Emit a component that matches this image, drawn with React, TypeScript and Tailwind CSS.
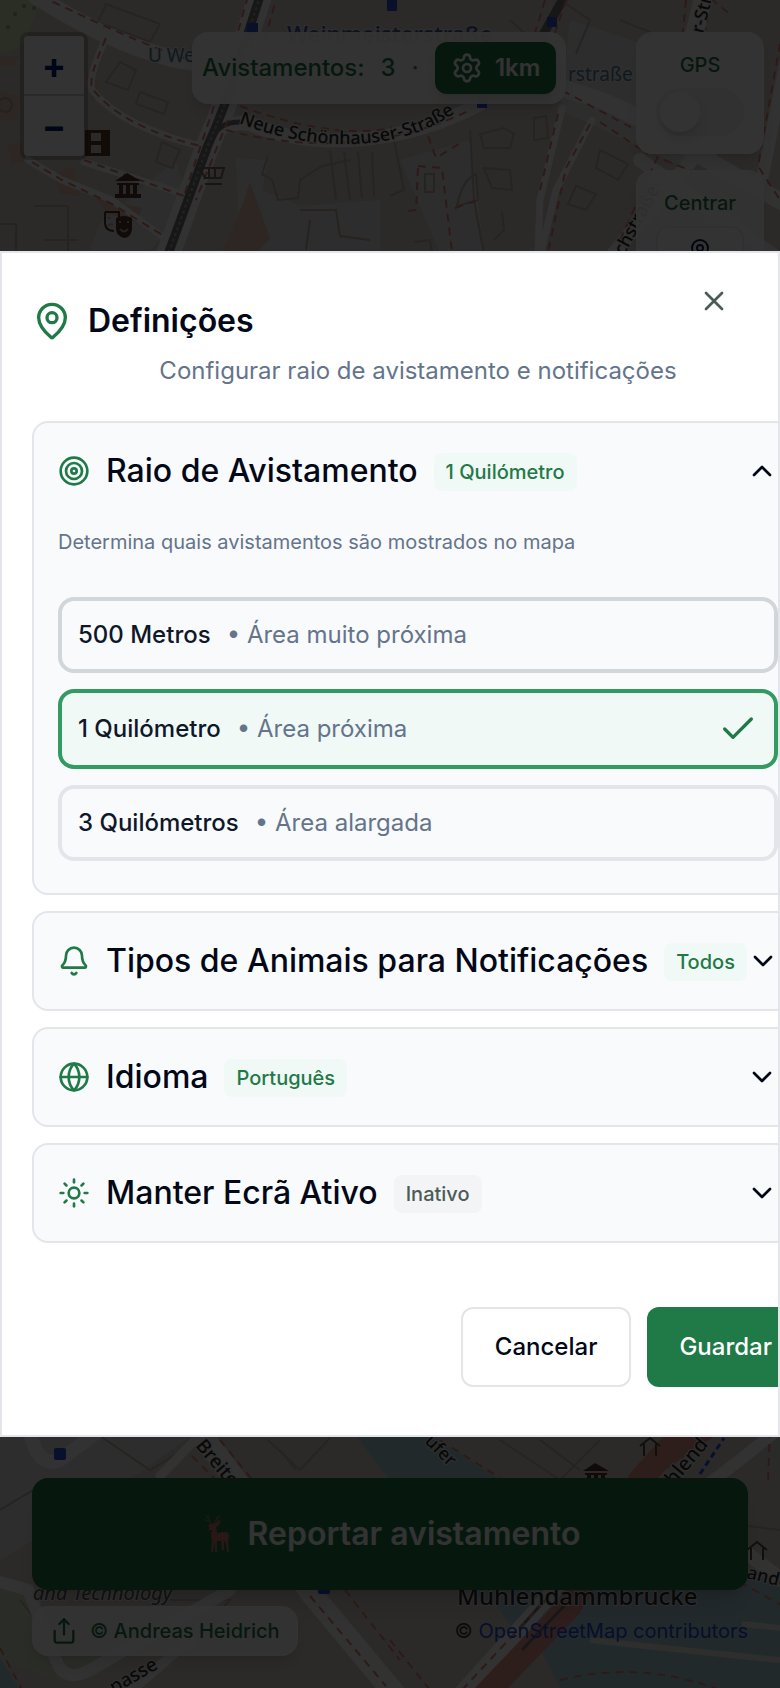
import React, { useState } from 'react';
import {
    Bell, Check, ChevronDown, ChevronUp, Globe, MapPin, Settings, Share, Sun, Target, X
} from 'lucide-react';

const streets: { d: string, w: number }[] = [
    { d: "M36 -4 C80 24 120 44 170 58 S400 60 520 80 S640 128 790 206", w: 17 },
    { d: "M262 -10 L236 70 Q226 105 208 145 L166 260", w: 24 },
    { d: "M212 136 Q226 120 250 124 C310 150 400 146 480 104", w: 14 },
    { d: "M106 38 Q88 76 92 90 Q120 126 200 146", w: 7 },
    { d: "M28 160 L62 180 L112 200 L170 242", w: 7 },
    { d: "M84 162 L190 196", w: 7 },
    { d: "M562 108 L540 200 L538 256", w: 7 },
    { d: "M592 120 L556 190 L540 256", w: 7 },
    { d: "M704 -5 L690 50", w: 18 },
    { d: "M788 50 L762 180", w: 12 },
    { d: "M640 160 L780 260", w: 14 },
    { d: "M700 150 L600 270", w: 14 },
    { d: "M0 1582 L28 1590 L56 1660 Q64 1684 90 1670 L230 1590", w: 12 },
    { d: "M30 1430 Q36 1468 60 1460 L100 1430", w: 14 },
    { d: "M195 1425 L250 1500 L310 1592 L400 1700", w: 22 },
    { d: "M200 1435 L160 1476", w: 9 },
    { d: "M455 1700 L600 1540", w: 16 },
    { d: "M120 1700 L190 1640", w: 10 },
    { d: "M790 1420 L740 1460 L700 1490", w: 12 },
    { d: "M740 1548 L790 1586", w: 14 },
];

const footways: string[] = [
    "M40 -4 C84 16 130 40 190 60",
    "M106 38 Q88 78 92 88 Q120 126 200 146",
    "M32 162 L62 180 L112 204 L164 236",
    "M84 160 L184 196",
    "M248 -4 L230 60", "M278 -8 L262 50",
    "M214 106 L184 196", "M228 120 L196 200",
    "M226 130 C300 150 390 150 470 110",
    "M240 106 C300 128 350 136 392 128",
    "M428 136 L436 158 L462 142", "M418 166 L442 168 L452 252", "M418 168 L416 210 L402 212",
    "M455 208 L478 200",
    "M558 114 L540 190", "M590 124 L566 168 L548 252",
    "M600 122 L648 154", "M550 84 L636 130", "M658 156 L620 240",
    "M686 0 L682 40", "M710 0 L706 30", "M780 44 L758 166 L780 200",
    "M545 0 L534 36", "M566 0 L554 36",
    "M700 -10 L730 14", "M664 160 L740 190",
    "M220 1440 L254 1482", "M192 1456 L222 1486",
    "M310 1596 L386 1686", "M345 1590 L400 1660",
    "M0 1648 L22 1690", "M390 1640 L430 1690",
    "M462 1690 L540 1606", "M440 1440 L500 1478",
    "M560 1680 Q640 1660 720 1690", "M740 1582 L790 1610", "M770 1430 L768 1480",
];

const buildings: string[] = [
    "M106 4 L160 24 L150 42 L98 22 Z", "M120 62 L136 70 L128 90 L106 82 Z",
    "M140 92 L168 102 L164 114 L136 104 Z", "M162 142 L180 150 L172 168 L156 162 Z",
    "M268 156 L262 174 L272 180 L278 200 L298 198 L300 180 L322 166 L350 160",
    "M0 224 L16 224 L16 252", "M34 206 L68 206 L68 252", "M44 240 H78",
    "M392 130 L404 190 L390 196", "M470 130 L474 200 L484 254",
    "M480 134 L504 128 L514 134 L510 148 L484 148 Z", "M484 168 L510 170 L512 190 L492 188 Z",
    "M414 242 L430 240 L432 252", "M534 118 L546 116 L548 138 L534 140 Z",
    "M576 186 L596 194 L586 210 L568 204 Z", "M600 150 L628 164 L618 180 L596 168 Z",
    "M560 0 L590 20 L576 54", "M620 20 L650 32 L640 50", "M510 20 L532 40",
    "M425 174 L434 174 L434 192 L425 192 Z", "M330 150 L336 200 M344 152 L350 200 M358 152 L362 198 M372 152 L374 196",
    "M300 210 H336 L340 236 L370 240 M310 220 L306 250",
    "M457 206 Q462 180 476 174 L478 200 Z", "M494 240 L504 230 L502 212",
    "M100 1436 L150 1470 L190 1446", "M268 1440 L300 1470 L330 1438 M280 1450 L296 1470",
    "M0 1510 L50 1480", "M500 1440 L560 1480 L600 1440", "M540 1440 L580 1470",
    "M20 1600 L60 1650", "M170 1600 L230 1600 L200 1630",
    "M700 1520 L780 1530",
];

const Museum = ({ x, y }: { x: number, y: number }) => (
    <g transform={`translate(${x} ${y})`} fill="#4f3a2c">
        <path d="M0 8 L12 0 L26 8 Z M2 10 H24 V12 H2 Z M4 12 H8 V21 H4 Z M11 12 H15 V21 H11 Z M18 12 H22 V21 H18 Z M0 21 H26 V25 H0 Z" />
    </g>
);

const Shelter = ({ x, y }: { x: number, y: number }) => (
    <path d={`M${x} ${y + 8} L${x + 10} ${y} L${x + 20} ${y + 8} M${x + 4} ${y + 6} V${y + 18} M${x + 16} ${y + 6} V${y + 18}`} fill="none" stroke="#5c4a3a" strokeWidth="2" />
);

const CityMap = () => (
    <svg className="absolute inset-0 h-full w-full" viewBox="0 0 780 1688" preserveAspectRatio="xMidYMid slice" aria-hidden="true">
        <rect width="780" height="1688" fill="#d8d1ca" />
        <g fill="#e2e1e0">
            <path d="M140 190 L176 160 L190 210 L150 250 H90 L100 224 Z" />
            <path d="M236 158 L268 160 L262 190 L300 206 L380 200 V252 H240 Z" />
            <path d="M400 160 L470 140 L484 252 H440 Z" />
            <path d="M0 1437 H190 L100 1500 L0 1560 Z" />
            <path d="M570 20 L690 60 V170 L560 110 Z" />
        </g>
        <path d="M0 -2 H42 L24 42 L14 50 L0 54 Z" fill="#cfe5b4" />
        <path d="M0 1578 L28 1590 L62 1680 L0 1660 Z M60 1662 L150 1640 L90 1680 Z" fill="#d0dcc0" />
        <path d="M250 182 L270 238 L258 252 H222 L242 206 Z M54 174 L74 166 L80 196 L60 194 Z M96 198 L142 208 L136 222 L108 214 Z M86 72 L100 84 L92 102 Z M0 56 H20 L14 66 H0 Z M0 92 L20 96 L18 120 L0 120 Z M8 144 L20 142 L28 162 L10 164 Z" fill="#e0bcaa" />
        <path d="M352 1430 H424 L500 1480 L620 1560 L780 1580 V1688 H560 L520 1610 L480 1600 Z M0 1658 L20 1690 H0 Z" fill="#aacbd8" />
        <path d="M486 1590 L560 1590 L520 1640 Z" fill="#aacbd8" />
        <g fill="none" stroke="#beb0a4" strokeWidth="2">
            {buildings.map((d, index) => (
                <path key={index} d={d} />
            ))}
        </g>
        <g fill="none" stroke="#f8f8f8" strokeLinecap="round">
            {streets.map((street, index) => (
                <path key={index} d={street.d} strokeWidth={street.w} />
            ))}
        </g>
        <g fill="none" stroke="#e0948c">
            <path d="M480 1700 L570 1606 L640 1480 L690 1425" strokeWidth="24" />
            <path d="M640 1480 L720 1425" strokeWidth="12" />
        </g>
        <g fill="none" stroke="#767676">
            <path d="M262 -10 L236 70 Q226 105 208 145 L166 260" strokeWidth="9" />
            <path d="M214 136 Q220 122 240 122" strokeWidth="5" />
            <path d="M568 -10 L540 40" strokeWidth="9" />
            <path d="M522 1650 L564 1606 M520 1628 L545 1600" strokeWidth="3" />
        </g>
        <path d="M262 -10 L236 70 Q226 105 208 145 L166 260" fill="none" stroke="#a8a8a8" strokeWidth="2" strokeDasharray="3 3" />
        <path d="M590 1640 Q680 1650 780 1660 M742 1624 L780 1628" fill="none" stroke="#e4e4e0" strokeWidth="6" />
        <g fill="none" stroke="#e08478" strokeWidth="2" strokeDasharray="8 6">
            {footways.map((d, index) => (
                <path key={index} d={d} />
            ))}
        </g>
        <path d="M700 1474 L724 1438" stroke="#2450e0" strokeWidth="3" strokeDasharray="6 4" />
        <g fill="#2a4fd4">
            <rect x="247" y="23" width="11" height="11" />
            <rect x="387" y="0" width="10" height="11" />
            <rect x="547" y="17" width="10" height="10" />
            <rect x="477" y="98" width="10" height="10" />
            <rect x="54" y="1448" width="12" height="12" rx="2" />
            <rect x="318" y="1582" width="12" height="12" rx="2" />
        </g>
        <g fill="#9aa890">
            <circle cx="24" cy="6" r="2" />
            <circle cx="15" cy="14" r="2" />
            <circle cx="8" cy="27" r="2" />
            <circle cx="34" cy="8" r="2" />
        </g>
        <circle cx="5" cy="105" r="7" fill="none" stroke="#b0aaa6" strokeWidth="2" />
        <Museum x={115} y={173} />
        <Museum x={583} y={1463} />
        <Shelter x={640} y={1438} />
        <Shelter x={747} y={1542} />
        {/* cinema, theatre and shop */}
        <path d="M85 130 H110 V156 H85 Z M91 133 V141 H101 V133 Z M91 145 V153 H101 V145 Z" fill="#5a3c30" fillRule="evenodd" />
        <path d="M105 212 H119 V219 M105 212 V224 Q106 231 114 231" fill="none" stroke="#4f3a2c" strokeWidth="2" />
        <path d="M116 218 Q124 214 132 218 V230 Q130 238 124 238 Q117 236 116 230 Z" fill="#4f3a2c" />
        <path d="M120 229 Q124 234 128 229 M108 218 H111 M119 222 H121 M127 222 H129 M108 226 Q111 223 113 225" stroke="#b8aea4" strokeWidth="2" fill="none" />
        <path d="M200 168 H224 L221 178 H205 Z M205 184 H222 M209 167 V178 M215 167 V178" fill="none" stroke="#7c6a5c" strokeWidth="2" />

        <path id="neue" d="M239 123 C290 144 392 164 464 106" fill="none" />
        <g fontFamily="'Noto Sans', sans-serif" fill="#2c2c2c" stroke="#ececec" strokeWidth="2" paintOrder="stroke">
            <text fontSize="18" fontWeight="500">
                <textPath href="#neue">Neue Schönhauser-Straße</textPath>
            </text>
            <g fill="#4f7ea0">
                <text x="148" y="62" fontSize="19">U We</text>
                <text x="568" y="81" fontSize="19">rstraße</text>
            </g>
            <text x="287" y="42" fontSize="22" fontWeight="600" fill="#405a98">Weinmeisterstraße</text>
            <text x="0" y="0" fontSize="18" fontWeight="500" transform="translate(703 34) rotate(-76)">r-Str</text>
            <text x="0" y="0" fontSize="18" fontWeight="500" transform="translate(624 256) rotate(-62)">chstraße</text>
            <text x="0" y="0" fontSize="19" fontWeight="500" transform="translate(195 1446) rotate(50)">Breite</text>
            <text x="0" y="0" fontSize="18" fontWeight="500" transform="translate(424 1442) rotate(45)">ufer</text>
            <text x="0" y="0" fontSize="20" fontWeight="500" transform="translate(666 1496) rotate(-50)">ühlend</text>
            <text x="0" y="0" fontSize="18" fontWeight="500" transform="translate(746 1578) rotate(14)">ando</text>
            <text x="33" y="1600" fontSize="20" fontStyle="italic" fill="#555555">and Technology</text>
            <text x="0" y="0" fontSize="19" fontWeight="500" transform="translate(114 1694) rotate(-30)">passe</text>
            <text x="457" y="1605" fontSize="24" fontWeight="500">Mühlendammbrücke</text>
        </g>
    </svg>
);

const Deer = () => (
    <svg className="h-10 w-10" viewBox="0 0 40 40" aria-hidden="true">
        <g fill="none" stroke="#a87466" strokeWidth="1" strokeLinecap="round">
            <path d="M11 10 L8 2 M10 6 L6 2 M9 7 L5 6 M14 10 L18 2 M16 6 L20 2 M15 8 L19 6" />
        </g>
        <path d="M7 14 Q9 9 14 10 L20 6 Q21 11 16 13 L17 19 Q21 18 26 18 Q30 19 29 23 L28 27 L29 38 H27 L26 30 L24 26 L24 36 H22 L21 27 H17 L17 38 H15 L15 28 L13 38 H11 L12 26 Q10 22 12 16 L8 16 Z" fill="#c87464" />
        <circle cx="8" cy="14" r="1" fill="#222222" />
        <path d="M19 22 h1 M22 21 h1 M25 22 h1 M22 24 h1 M26 25 h1" stroke="#f4d4bc" strokeWidth="1" />
    </svg>
);

type SectionProps = {
    icon: React.ElementType,
    title: string,
    badge: string,
    muted?: boolean,
    open?: boolean,
    onToggle: () => void,
    children?: React.ReactNode
}

const Section = ({ icon: Icon, title, badge, muted, open, onToggle, children }: SectionProps) => (
    <section className="rounded-2xl border-2 border-[#e4e5eb] bg-[#f9fafc]">
        <h3>
            <button type="button" aria-expanded={!!open} onClick={onToggle} className="flex h-24 w-full items-center justify-between px-6">
                <span className="flex items-center gap-4">
                    <Icon size={32} className="shrink-0 text-[#1f7a48]" />
                    <span className="text-[32px] leading-[48px] font-medium whitespace-nowrap">{title}</span>
                    <span className={`mt-[2px] rounded-lg px-3 py-1 text-[20px] leading-[30px] font-medium ${muted ? "bg-[#f3f4f6] text-[#4b5b57]" : "bg-[#f0f9f5] text-[#1f7a48]"}`}>
                        {badge}
                    </span>
                </span>
                {open
                    ? <ChevronUp size={32} className="shrink-0" />
                    : <ChevronDown size={32} className="shrink-0" />}
            </button>
        </h3>
        {open && children}
    </section>
);

const App = () => {
    const radii: { label: string, hint: string, border: string }[] = [
        { label: "500 Metros", hint: "Área muito próxima", border: "border-[#d0d6da]" },
        { label: "1 Quilómetro", hint: "Área próxima", border: "border-[#e4e5eb]" },
        { label: "3 Quilómetros", hint: "Área alargada", border: "border-[#e4e5eb]" },
    ]
    const [radius, setRadius] = useState("1 Quilómetro")
    const [open, setOpen] = useState("raio")
    const toggle = (name: string) => setOpen(open === name ? "" : name)

    return (
        <div className="relative flex min-h-screen flex-col justify-between overflow-hidden font-[Inter,sans-serif] text-[#020817]">
            <CityMap />

            <header className="relative flex items-start pt-8 pr-4 pl-5">
                <div className="flex w-[68px] flex-col rounded-lg border-4 border-black/20 bg-clip-padding text-[36px] leading-none font-bold text-[#00206a]">
                    <button type="button" aria-label="Aumentar zoom" className="h-[60px] rounded-t border-b-2 border-[#cccccc] bg-white">+</button>
                    <button type="button" aria-label="Diminuir zoom" className="h-[60px] rounded-b bg-white">−</button>
                </div>
                <div className="ml-[104px] flex items-center gap-4 rounded-2xl bg-white/95 p-[10px] text-[24px] leading-9 font-medium whitespace-nowrap text-[#1f7a48] shadow-lg">
                    <span>Avistamentos:</span>
                    <span>3</span>
                    <span className="text-[#64748b]">·</span>
                    <button type="button" className="flex h-[52px] items-center gap-3 rounded-xl bg-[#1f7a48] px-4 font-semibold text-white shadow-lg">
                        <Settings size={32} />
                        1km
                    </button>
                </div>
                <div className="ml-auto flex flex-col gap-4 text-[20px] leading-[30px] font-medium text-[#1f7a48]">
                    <div className="flex flex-col items-center gap-2 rounded-2xl border-2 border-white/20 bg-white/95 px-[18px] py-4 shadow-lg">
                        <label htmlFor="gps">GPS</label>
                        <input id="gps" type="checkbox" role="switch" className="h-12 w-[88px] appearance-none rounded-full bg-[#f2f2f2] p-1 before:block before:h-10 before:w-10 before:rounded-full before:bg-white before:shadow-lg checked:bg-[#1f7a48] checked:before:ml-10" />
                    </div>
                    <div className="flex flex-col items-center gap-2 rounded-2xl border-2 border-white/20 bg-white/90 px-[18px] py-4 shadow-lg">
                        <span>Centrar</span>
                        <button type="button" aria-label="Centrar" className="flex h-12 w-[88px] items-center justify-center rounded-xl border-2 border-[#eeeeee] bg-white text-[#0b1a4a]">
                            <MapPin size={24} />
                        </button>
                    </div>
                </div>
            </header>

            <footer className="relative flex flex-col gap-4 px-8 pb-8">
                <button type="button" className="flex h-28 items-center justify-center gap-2 rounded-2xl bg-[#1f7a48] text-[32px] font-semibold text-white shadow-xl">
                    <Deer />
                    Reportar avistamento
                </button>
                <div className="flex items-center justify-between text-[20px] leading-[30px]">
                    <a href="#autor" className="flex h-[50px] items-center gap-3 rounded-2xl border-2 border-white/20 bg-white/90 px-4 font-medium text-[#1f7a48] shadow-lg">
                        <Share size={28} />
                        © Andreas Heidrich
                    </a>
                    <p className="text-[#333333]">
                        © <a href="#osm" className="text-[#1d4ed8]">OpenStreetMap contributors</a>
                    </p>
                </div>
            </footer>

            <div className="fixed inset-0 flex items-center bg-black/80">
                <div role="dialog" aria-modal="true" aria-labelledby="titulo" className="relative w-full overflow-hidden border-2 border-[#e4e5eb] bg-white py-12">
                    <button type="button" aria-label="Fechar" className="absolute top-8 right-12 text-[#4b5b57]">
                        <X size={32} />
                    </button>

                    {/* content runs past the right edge and gets clipped */}
                    <div className="-mr-[26px] ml-[30px]">
                        <h2 id="titulo" className="flex h-10 items-center gap-4 text-[32px] leading-10 font-semibold">
                            <MapPin size={40} className="text-[#1f7a48]" />
                            Definições
                        </h2>
                        <p className="mt-3 text-center text-[24px] leading-9 text-[#64748b]">
                            Configurar raio de avistamento e notificações
                        </p>

                        <div className="mt-8 flex flex-col gap-4">
                            <Section icon={Target} title="Raio de Avistamento" badge={radius} open={open === "raio"} onToggle={() => toggle("raio")}>
                                <div className="px-6 pt-2 pb-8">
                                    <p className="text-[20px] leading-[30px] text-[#64748b]">
                                        Determina quais avistamentos são mostrados no mapa
                                    </p>
                                    <div className="mt-10 flex flex-col gap-4">
                                        {
                                            radii.map((item) => (
                                                <label key={item.label} className={`flex items-center rounded-2xl border-4 p-4 text-[24px] leading-9 ${radius === item.label ? "border-[#319b62] bg-[#f0f9f5]" : item.border}`}>
                                                    <input type="radio" name="raio" className="sr-only" checked={radius === item.label} onChange={() => setRadius(item.label)} />
                                                    <span className="font-medium text-[#0f172a]">{item.label}</span>
                                                    <span className="ml-4 text-[#64748b]">• {item.hint}</span>
                                                    {radius === item.label && <Check size={40} className="ml-auto text-[#1f7a48]" />}
                                                </label>
                                            ))
                                        }
                                    </div>
                                </div>
                            </Section>
                            <Section icon={Bell} title="Tipos de Animais para Notificações" badge="Todos" open={open === "tipos"} onToggle={() => toggle("tipos")} />
                            <Section icon={Globe} title="Idioma" badge="Português" open={open === "idioma"} onToggle={() => toggle("idioma")} />
                            <Section icon={Sun} title="Manter Ecrã Ativo" badge="Inativo" muted open={open === "ecra"} onToggle={() => toggle("ecra")} />
                        </div>

                        <div className="mt-16 flex justify-end gap-4 text-[24px] leading-9 font-medium">
                            <button type="button" className="h-20 rounded-xl border-2 border-[#e4e5eb] bg-white px-8">Cancelar</button>
                            <button type="button" className="h-20 rounded-xl bg-[#1f7a48] px-8 text-white">Guardar</button>
                        </div>
                    </div>
                </div>
            </div>
        </div>

    )
};

export default App;
